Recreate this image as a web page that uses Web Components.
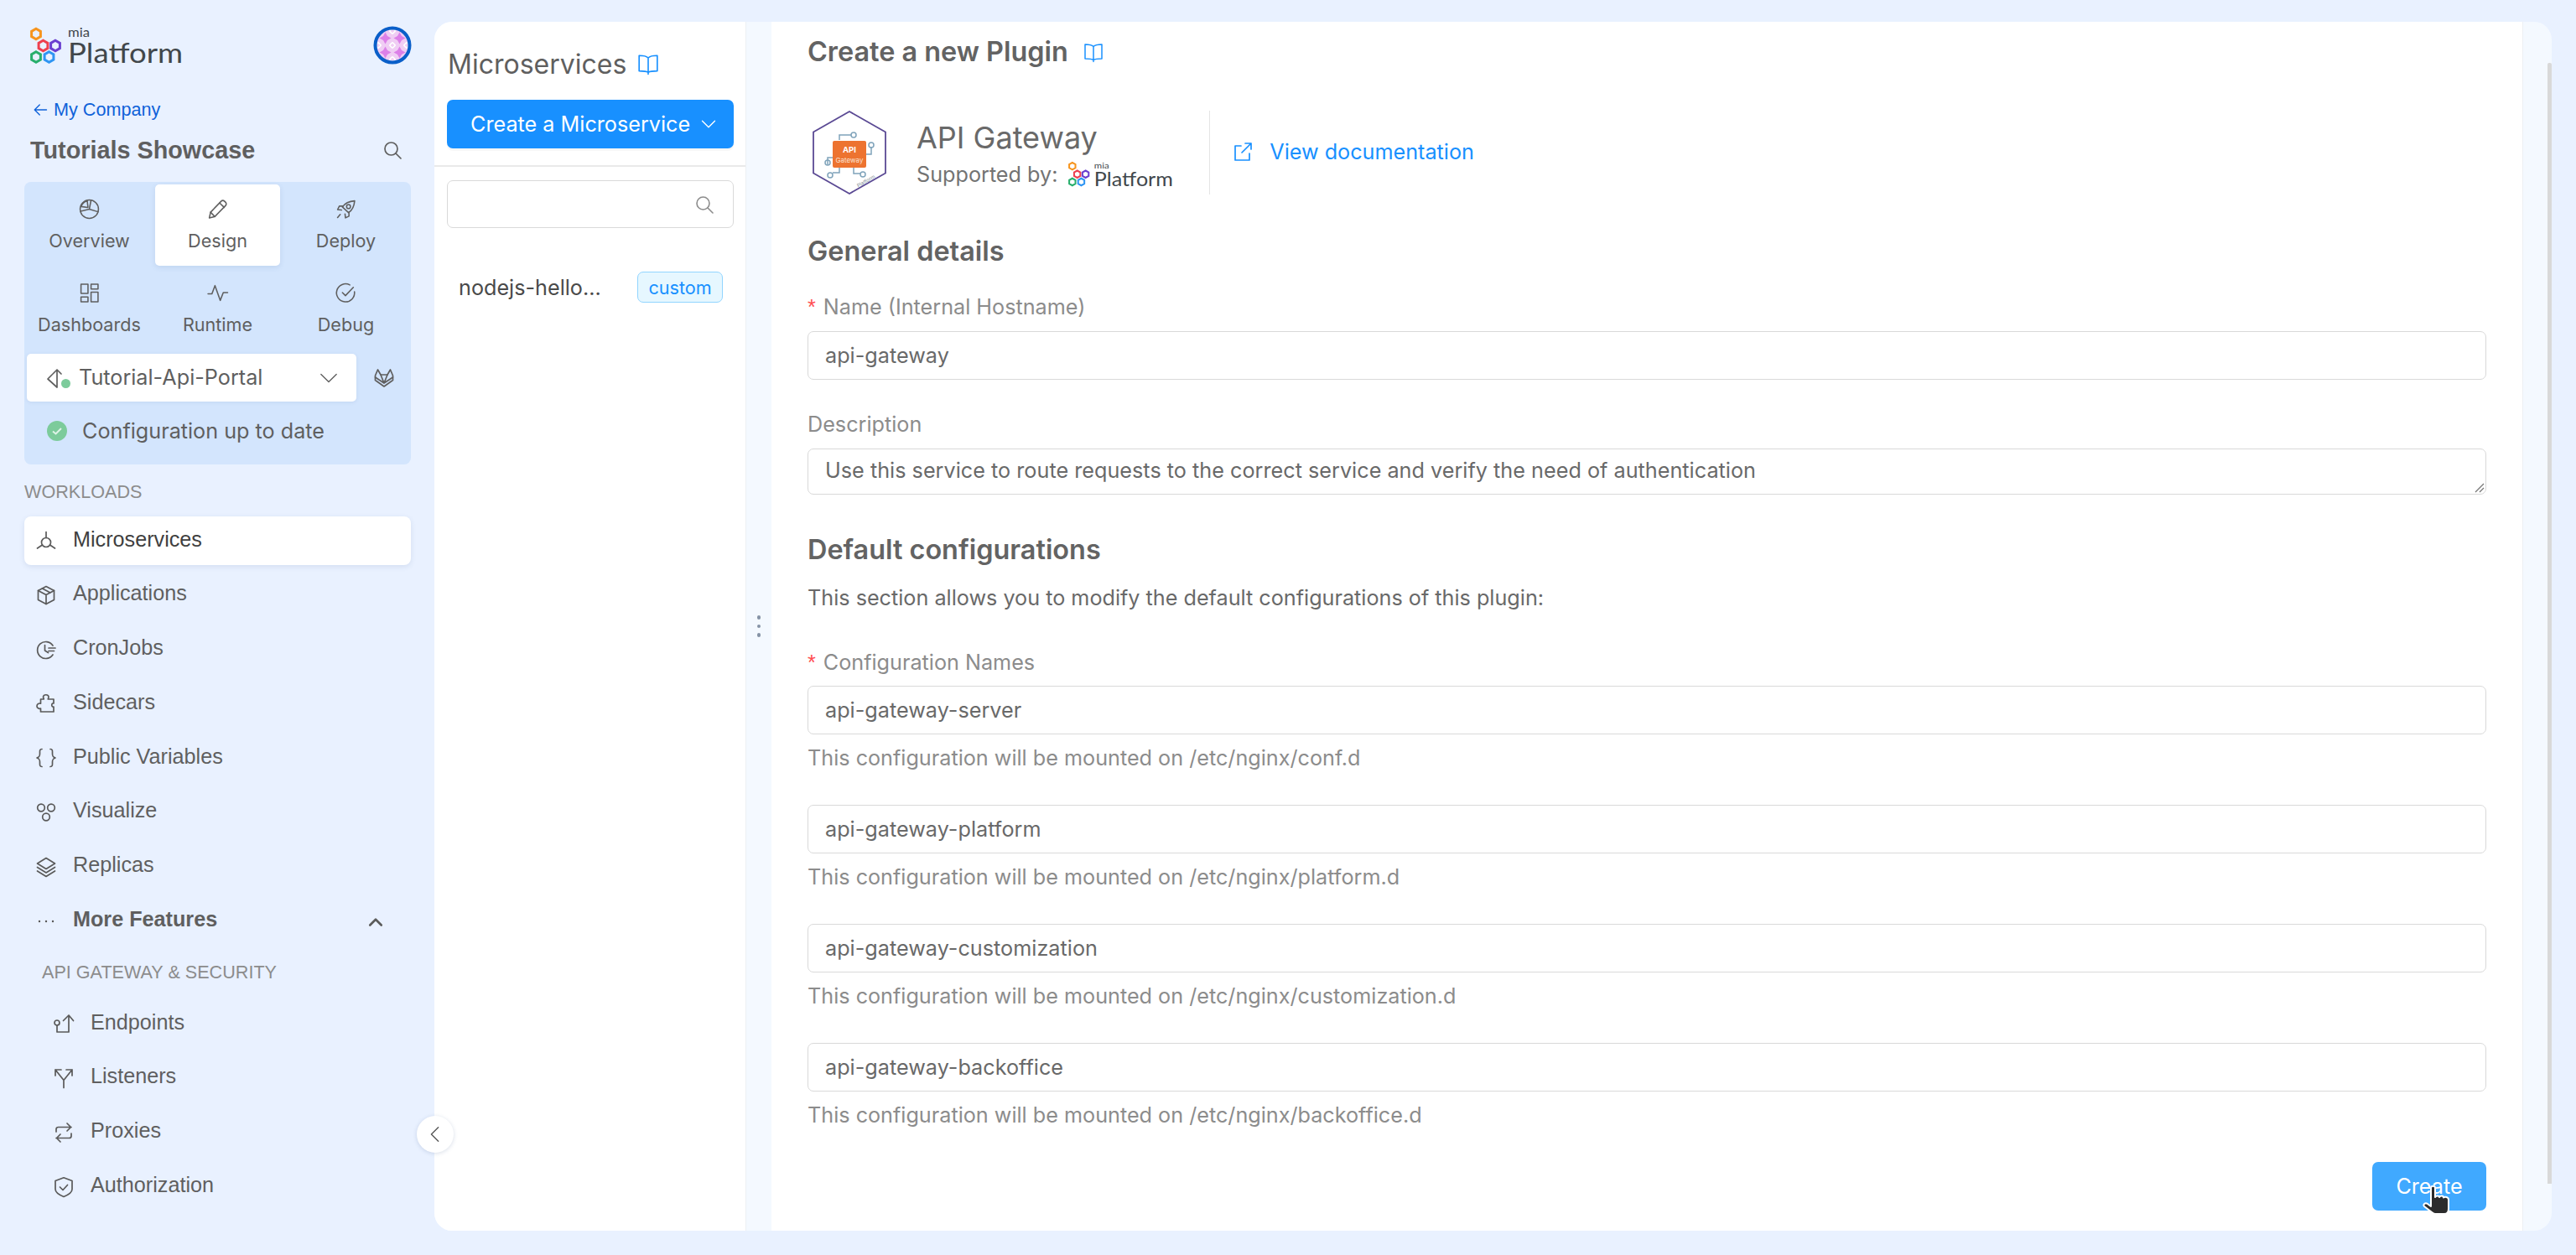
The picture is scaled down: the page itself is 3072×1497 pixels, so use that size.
<!DOCTYPE html>
<html>
<head>
<meta charset="utf-8">
<title>Create a new Plugin</title>
<style>
  html, body { margin: 0; height: 100%; overflow: hidden; background: #e9f1ff; }
  body { font-family: Inter, "Liberation Sans", sans-serif; color: #5f5f5f; }
</style>
</head>
<body>
<mia-app>
  <mia-sidebar slot="sidebar"></mia-sidebar>
  <mia-list slot="list"></mia-list>
  <mia-plugin-form slot="form"></mia-plugin-form>
</mia-app>

<script>
const ICONS = {
  search: '<circle cx="10.5" cy="10.5" r="7.5"/><path d="M16 16l6 6"/>',
  pie: '<circle cx="12" cy="12" r="10.500"/><path d="M12 12l-10 2.500M12 12l2-10.300M12 12l10 3" /><path d="M2.600 9c1-3 3.500-5.600 7-6.700L10.500 10z"/>',
  pencil: '<path d="M2.500 22l1.500-6.500L16 3c1.200-1.200 2.800-1.200 4 0l1 1c1.200 1.200 1.200 2.800 0 4L8.800 20.500z"/><path d="M4 15.500l4.800 5M14.500 5l5 5"/>',
  rocket: '<path d="M8 9.500c3-4.500 7.500-6.500 14-7-.5 6.500-2.500 10.500-7 13.500L8 9.500z"/><circle cx="15" cy="9" r="2.200"/><path d="M9 8.500L4.500 8.500 2.500 12.500l4.500.5M15.500 15.500v4.500l-4 2-.5-4.500M5.500 18L2.500 21.500"/>',
  dashboards: '<rect x="2.500" y="2" width="8" height="10.500"/><rect x="14" y="2" width="8" height="5.500"/><rect x="2.500" y="16.500" width="8" height="5.500"/><rect x="14" y="11" width="8" height="11"/>',
  pulse: '<path d="M1 13h4.500L9 3.500l6 17 3.500-9H23.500"/>',
  debug: '<path d="M21.800 10.500A10.300 10.300 0 1 1 16.500 2.800"/><path d="M8 11.500l3.500 3.500L20.500 5.500"/>',
  branch: '<path d="M14 23V2M9 7l5-5 5 5M14 23L3 13l5-5"/>',
  chevron: '<path d="M2 7l10 10L22 7"/>',
  gitlab: '<path d="M1.500 9L4.500 2 8 8h8l3.500-6 3 7v5.500L12 22 1.500 14.500z"/><path d="M1.500 11L12 18l10.500-7M8 8l4 10 4-10"/>',
  micro: '<circle cx="12" cy="14" r="5.500"/><path d="M12 8.500V1.500M7.500 17L1.500 21M16.500 17l6 4"/>',
  box: '<path d="M12 1.500l9.500 5v11L12 22.500l-9.500-5v-11z"/><path d="M2.500 6.500L12 11.500l9.500-5M12 11.500v11M7.500 4l9.500 5"/>',
  cron: '<path d="M20 7A10 10 0 1 0 20 18"/><path d="M10.500 6.500V13l4 2.500M15 10h8M15 13.500h6.500"/>',
  puzzle: '<path d="M8.500 4.500C8.500 .8 15 .8 15 4.500c0 1.200-.7 1.500-.7 2.500H21v5c-3-1-3 5 0 4v6H5.500v-4c-2 1-4.500-.5-4.500-2.800s2.500-3.700 4.500-3V7h3.700C9.500 6 8.500 5.500 8.500 4.500z"/>',
  braces: '<path d="M7 1.500C4 1.500 4.500 4 4.500 7S4 11 1 12c3 1 3.500 2 3.500 5S4 22.500 7 22.500M17 1.500c3 0 2.500 2.500 2.500 5.500s.5 4 3.500 5c-3 1-3.500 2-3.500 5s.5 5.500-2.500 5.500"/>',
  nodes: '<circle cx="6" cy="6.500" r="4.300"/><circle cx="18" cy="6.500" r="4.300"/><circle cx="12" cy="17.500" r="4.300"/>',
  layers: '<path d="M12 1.500l10.500 6.500L12 14.500 1.500 8z"/><path d="M1.500 12.500l10.500 6.500 10.500-6.500M1.500 17l10.500 6.500L22.500 17"/>',
  dots: '<path d="M4 12h.01M12 12h.01M20 12h.01" stroke-width="2.400" stroke-linecap="round"/>',
  up: '<path d="M3 18l9-9 9 9" stroke-width="3.500"/>',
  endpoints: '<circle cx="4" cy="11" r="3"/><path d="M4 14v8h14V2M11.500 8.500L18 2l5.500 6.500"/>',
  split: '<path d="M12 23.500v-9L2 2M12 14.500L22 2M2 9V2h7M15 2h7v7"/>',
  proxies: '<path d="M3 11V8c0-1.500 1-2.500 2.500-2.500H21M16 1l4.500 4.500L16 10M21 13v3c0 1.500-1 2.500-2.500 2.500H3M8 14l-4.500 4.500L8 23"/>',
  shield: '<path d="M12 .8L22 4.500v10c0 4-4 6.500-10 9-6-2.500-10-5-10-9v-10z"/><path d="M7.500 12l3.500 3.500 5.500-6"/>',
  book: '<path d="M12 5.500C10 3.500 7 3 2 3v17c5 0 8 .3 10 1.500 2-1.200 5-1.500 10-1.500V3c-5 0-8 .5-10 2.500zM12 5.500v18"/>',
  external: '<path d="M10 5H3v17h17v-8M11 13L22 2M15 2h7v7"/>',
  back: '<path d="M22 12H3M11 4l-8 8 8 8"/>',
  left: '<path d="M16 3l-9 9 9 9"/>',
  key: '<circle cx="12" cy="12" r="10"/>'
};

class MiaIcon extends HTMLElement {
  connectedCallback() {
    const size = this.getAttribute('size') || 24;
    const sw = this.getAttribute('sw') || 1.7;
    this.attachShadow({ mode: 'open' });
    this.shadowRoot.innerHTML = `<style>
      :host { display: inline-flex; flex: none; width: ${size}px; height: ${size}px; }
      svg { width: 100%; height: 100%; fill: none; stroke: currentColor; stroke-width: ${sw}; stroke-linejoin: round; stroke-linecap: round; overflow: visible; }
    </style><svg viewBox="0 0 24 24">${ICONS[this.getAttribute('name')] || ''}</svg>`;
  }
}

function hex(cx, cy, color) {
  const r = 6.2, w = 5.4;
  const d = `M${cx} ${cy - r}L${cx + w} ${cy - r / 2}V${cy + r / 2}L${cx} ${cy + r}L${cx - w} ${cy + r / 2}V${cy - r / 2}Z`;
  return `<path d="${d}" stroke="${color}"/>`;
}

const HEXES = `<g fill="none" stroke-width="3">
  ${hex(7, 7.5, '#f7941d')}${hex(15.5, 21.5, '#ee3f4e')}${hex(30, 21.5, '#6a3fd0')}${hex(7, 35, '#27ae6c')}${hex(22.5, 35, '#2f95f3')}
</g>`;

class MiaLogo extends HTMLElement {
  connectedCallback() {
    const h = this.getAttribute('height') || 43;
    this.attachShadow({ mode: 'open' });
    this.shadowRoot.innerHTML = `<style>
      :host { display: inline-flex; flex: none; }
      svg { display: block; height: ${h}px; width: auto; overflow: visible; }
      text { font-family: Lato, "Open Sans", sans-serif; fill: #41474b; }
    </style>
    <svg viewBox="0 0 182 43">
      ${HEXES}
      <text x="45" y="11" font-size="15" textLength="26" lengthAdjust="spacingAndGlyphs">mia</text>
      <text x="45" y="42" font-size="33" textLength="137" lengthAdjust="spacingAndGlyphs">Platform</text>
    </svg>`;
  }
}

class MiaTab extends HTMLElement {
  connectedCallback() {
    this.attachShadow({ mode: 'open' });
    this.shadowRoot.innerHTML = `<style>
      :host { display: flex; flex-direction: column; align-items: center; height: 97px; padding-top: 17px; box-sizing: border-box; border-radius: 5px; font-size: 21.600px; line-height: 36px; color: #5f5f5f; }
      :host([active]) { background: #fff; box-shadow: 0 2px 6px rgba(60,90,140,.12); }
      span { margin-top: 7px; }
    </style>
    <mia-icon name="${this.getAttribute('icon')}" size="25" sw="1.500"></mia-icon>
    <span><slot></slot></span>`;
  }
}

class MiaNavItem extends HTMLElement {
  connectedCallback() {
    const icon = this.getAttribute('icon');
    const trail = this.hasAttribute('trail') ? `<mia-icon class="trail" name="up" size="18"></mia-icon>` : '';
    this.attachShadow({ mode: 'open' });
    this.shadowRoot.innerHTML = `<style>
      :host { display: flex; align-items: center; height: 58px; margin-bottom: 6.800px; padding-left: 14px; padding-right: 33px; gap: 20px; box-sizing: border-box; border-radius: 8px; font-family: "Liberation Sans", Arial, sans-serif; font-size: 25.200px; color: #5f5f5f; }
      :host([sub]) { padding-left: 35px; }
      :host([active]) { background: #fff; color: #3f3f3f; box-shadow: 0 2px 6px rgba(60,90,140,.12); }
      :host([strong]) { font-weight: 700; }
      .label { flex: 1; margin-bottom: 4px; }
      mia-icon { color: #5a5a5a; }
    </style>
    <mia-icon name="${icon}" size="24"></mia-icon>
    <span class="label"><slot></slot></span>${trail}`;
  }
}

class MiaSidebar extends HTMLElement {
  connectedCallback() {
    this.attachShadow({ mode: 'open' });
    this.shadowRoot.innerHTML = `<style>
      :host { display: block; flex: none; height: 1467px; width: 518px; box-sizing: border-box; padding-top: 33px; overflow: hidden; }
      .top { display: flex; justify-content: space-between; align-items: flex-start; padding: 0 27px 0 36px; height: 43px; }
      .avatar { width: 46px; height: 46px; margin-top: -2px; }
      .back { display: flex; align-items: center; gap: 7px; margin: 37px 0 0 39px; height: 36px; color: #0f62d9; font-size: 21.600px; font-family: "Liberation Sans", Arial, sans-serif; }
      .title { display: flex; justify-content: space-between; align-items: center; margin: 12px 38px 0 36px; height: 36px; font: 700 28.800px/36px "Liberation Sans", Arial, sans-serif; color: #5f5f5f; }
      .panel { margin: 20px 28px 0 29px; height: 337px; box-sizing: border-box; padding: 3px; background: #d3e5fd; border-radius: 8px; }
      .tabs { display: grid; grid-template-columns: repeat(3, 1fr); column-gap: 4px; row-gap: 3px; }
      .branch { display: flex; align-items: center; gap: 21px; margin-top: 5px; }
      .select { flex: none; display: flex; align-items: center; width: 393px; height: 57px; box-sizing: border-box; padding: 0 22px 0 22px; background: #fff; border-radius: 5px; font-size: 25.200px; color: #5f5f5f; box-shadow: 0 1px 4px rgba(60,90,140,.1); }
      .select .name { flex: 1; margin-left: 10px; position: relative; top: -1px; }
      .dot { width: 11px; height: 11px; border-radius: 50%; background: #7ccb9b; margin: 14px 0 0 -5px; }
      .status { display: flex; align-items: center; gap: 18px; margin: 17px 0 0 24px; font-size: 25.200px; height: 36px; }
      .ok { width: 24px; height: 24px; }
      .heading { margin: 15px 0 0 29px; height: 36px; font: 400 21.600px/36px "Liberation Sans", Arial, sans-serif; color: #8c8c8c; }
      .sub { margin: 14.600px 0 14px 50px; height: 36px; font: 400 21.600px/36px "Liberation Sans", Arial, sans-serif; color: #8c8c8c; }
      .nav { margin: 11px 28px 0 29px; }
      .nav.second { margin-top: 0; }
    </style>
    <div class="top">
      <mia-logo height="43"></mia-logo>
      <svg class="avatar" viewBox="0 0 46 46">
        <defs><pattern id="p" width="17" height="17" patternUnits="userSpaceOnUse" x="6" y="6">
          <rect width="17" height="17" fill="#f0cdf4"/>
          <path d="M8.500 1.500l2.500 4.500 4.500 2.500-4.500 2.500-2.500 4.500-2.500-4.500-4.500-2.500 4.500-2.500z" fill="#dc80e8"/>
          <path d="M0 3.500L3.500 0M13.500 0L17 3.500M0 13.500L3.500 17M13.500 17L17 13.500" stroke="#fff" stroke-width="1.600"/>
        </pattern></defs>
        <circle cx="23" cy="23" r="20.500" fill="url(#p)" stroke="#0a5fc9" stroke-width="4"/>
      </svg>
    </div>
    <div class="back"><mia-icon name="back" size="18" sw="1.800"></mia-icon><span>My Company</span></div>
    <div class="title"><span>Tutorials Showcase</span><mia-icon name="search" size="24" sw="1.700"></mia-icon></div>
    <div class="panel">
      <div class="tabs">
        <mia-tab icon="pie">Overview</mia-tab>
        <mia-tab icon="pencil" active>Design</mia-tab>
        <mia-tab icon="rocket">Deploy</mia-tab>
        <mia-tab icon="dashboards">Dashboards</mia-tab>
        <mia-tab icon="pulse">Runtime</mia-tab>
        <mia-tab icon="debug">Debug</mia-tab>
      </div>
      <div class="branch">
        <div class="select">
          <mia-icon name="branch" size="24"></mia-icon><span class="dot"></span>
          <span class="name">Tutorial-Api-Portal</span>
          <mia-icon name="chevron" size="22" sw="1.500"></mia-icon>
        </div>
        <mia-icon name="gitlab" size="24"></mia-icon>
      </div>
      <div class="status">
        <svg class="ok" viewBox="0 0 24 24"><circle cx="12" cy="12" r="12" fill="#7ccb9b"/><path d="M7 12.500l3.500 3 6.500-6.500" fill="none" stroke="#dff3e7" stroke-width="2"/></svg>
        <span>Configuration up to date</span>
      </div>
    </div>
    <div class="heading">WORKLOADS</div>
    <div class="nav">
      <mia-nav-item icon="micro" active>Microservices</mia-nav-item>
      <mia-nav-item icon="box">Applications</mia-nav-item>
      <mia-nav-item icon="cron">CronJobs</mia-nav-item>
      <mia-nav-item icon="puzzle">Sidecars</mia-nav-item>
      <mia-nav-item icon="braces">Public Variables</mia-nav-item>
      <mia-nav-item icon="nodes">Visualize</mia-nav-item>
      <mia-nav-item icon="layers">Replicas</mia-nav-item>
      <mia-nav-item icon="dots" strong trail>More Features</mia-nav-item>
    </div>
    <div class="sub">API GATEWAY &amp; SECURITY</div>
    <div class="nav second">
      <mia-nav-item icon="endpoints" sub>Endpoints</mia-nav-item>
      <mia-nav-item icon="split" sub>Listeners</mia-nav-item>
      <mia-nav-item icon="proxies" sub>Proxies</mia-nav-item>
      <mia-nav-item icon="shield" sub>Authorization</mia-nav-item>
      <mia-nav-item icon="key" sub></mia-nav-item>
    </div>`;
  }
}

class MiaList extends HTMLElement {
  connectedCallback() {
    this.attachShadow({ mode: 'open' });
    this.shadowRoot.innerHTML = `<style>
      :host { display: block; flex: none; width: 371px; height: 100%; background: #fff; }
      .head { display: flex; align-items: center; gap: 13px; margin: 30px 0 0 16px; height: 40px; font-size: 32px; color: #5f5f5f; }
      .head mia-icon { color: #1890ff; }
      .create { display: flex; align-items: center; gap: 13px; margin: 23px 14px 0 15px; padding-left: 28px; height: 58px; background: #1890ff; color: #fff; border-radius: 7px; font-size: 25.200px; box-shadow: 0 3px 0 rgba(0,0,0,.03); }
      hr { margin: 20px 0 0; border: 0; border-top: 2px solid #e9e9e9; }
      .search { display: flex; align-items: center; justify-content: flex-end; margin: 16px 14px 0 15px; height: 57px; box-sizing: border-box; padding-right: 22px; border: 1.500px solid #d9d9d9; border-radius: 7px; color: #8c8c8c; }
      .row { display: flex; align-items: center; justify-content: space-between; margin: 52px 27px 0 29px; height: 37px; font-size: 25.200px; color: #4a4a4a; }
      .tag { height: 37px; width: 102px; box-sizing: border-box; display: flex; align-items: center; justify-content: center; background: #e6f7ff; border: 1.500px solid #91d5ff; border-radius: 7px; color: #1890ff; font-size: 21.600px; }
    </style>
    <div class="head"><span>Microservices</span><mia-icon name="book" size="26" sw="1.500"></mia-icon></div>
    <div class="create"><span>Create a Microservice</span><mia-icon name="chevron" size="18" sw="1.800"></mia-icon></div>
    <hr>
    <div class="search"><mia-icon name="search" size="24" sw="1.600"></mia-icon></div>
    <div class="row"><span>nodejs-hello...</span><span class="tag">custom</span></div>`;
  }
}

class MiaField extends HTMLElement {
  connectedCallback() {
    const req = this.hasAttribute('required') ? '<i>*</i>' : '';
    const label = this.getAttribute('label');
    const help = this.getAttribute('help');
    const area = this.hasAttribute('area');
    this.attachShadow({ mode: 'open' });
    this.shadowRoot.innerHTML = `<style>
      :host { display: block; font-size: 25.200px; }
      .label { height: 36px; line-height: 36px; color: #8c8c8c; margin-bottom: 11px; }
      :host([tight]) .label { margin-bottom: 10px; }
      i { font-style: normal; color: #ff4d4f; margin-right: 9px; font-family: "Liberation Sans", sans-serif; }
      .input { position: relative; display: flex; align-items: center; box-sizing: border-box; height: 58px; padding: 0 20px; border: 1.500px solid #d9d9d9; border-radius: 7px; color: #696969; background: #fff; letter-spacing: .02px; }
      :host([area]) .input { height: 55px; padding-bottom: 4px; }
      .grip { position: absolute; right: 1px; bottom: 1px; width: 14px; height: 14px; }
      .help { height: 36px; line-height: 36px; margin-top: 10px; color: #8c8c8c; }
    </style>
    ${label ? `<div class="label">${req}${label}</div>` : ''}
    <div class="input"><span><slot></slot></span>${area ? '<svg class="grip" viewBox="0 0 14 14"><path d="M13 3L3 13M13 8l-5 5" stroke="#777" stroke-width="1.300"/></svg>' : ''}</div>
    ${help ? `<div class="help">${help}</div>` : ''}`;
  }
}

class MiaPluginLogo extends HTMLElement {
  connectedCallback() {
    this.attachShadow({ mode: 'open' });
    this.shadowRoot.innerHTML = `<style>
      :host { display: block; flex: none; width: 100px; height: 100px; }
      svg { display: block; width: 100px; height: 100px; }
      text { font-family: Inter, sans-serif; text-anchor: middle; }
    </style>
    <svg viewBox="0 0 100 100">
      <path d="M50 1L93 25.500v49L50 99 7 74.500v-49z" fill="#fff" stroke="#5b4a94" stroke-width="1.800"/>
      <g fill="none" stroke="#7fa3ba" stroke-width="1.500">
        <path d="M38 35v-6h14"/><circle cx="55" cy="29" r="3"/>
        <path d="M70 52h6v-8h-1"/><circle cx="76" cy="41" r="3"/>
        <path d="M30 56h-6v8"/><circle cx="24" cy="62" r="3"/>
        <path d="M38 66v8H30"/><circle cx="27" cy="77" r="3"/>
        <path d="M55 68v7h8"/><circle cx="66" cy="76" r="3"/>
      </g>
      <rect x="30" y="36" width="40" height="32" rx="2" fill="#ed7330"/>
      <text x="50" y="50" font-size="9.500" font-weight="700" fill="#fff">API</text>
      <text x="50" y="62" font-size="8" fill="#fbe3d3">Gateway</text>
      <g transform="rotate(-30 68 85)"><text x="70" y="87" font-size="6" fill="#7c8a94">Platform</text></g>
    </svg>`;
  }
}

class MiaPluginForm extends HTMLElement {
  connectedCallback() {
    this.attachShadow({ mode: 'open' });
    this.shadowRoot.innerHTML = `<style>
      :host { display: flex; flex-direction: column; box-sizing: border-box; flex: 1; min-width: 0; height: 100%; padding: 15px 43px 0; background: #fff; border-right: 1.500px solid #ecf0f4; font-size: 25.200px; color: #696969; position: relative; }
      .h { flex: none; height: 40px; line-height: 40px; font-size: 32.400px; font-weight: 600; color: #636363; }
      .title { display: flex; align-items: center; gap: 18px; margin-top: 1px; margin-bottom: -1px; }
      .title mia-icon { color: #1890ff; }
      .plugin { display: flex; align-items: center; flex: none; height: 100px; margin-top: 51px; }
      .who { margin: 4px 0 0 30px; }
      .name { font-size: 36px; line-height: 44px; color: #696969; }
      .by { display: flex; align-items: center; gap: 13px; line-height: 36px; margin-top: 4px; color: #737373; }
      .sep { width: 1.500px; height: 100px; background: #e4e4e4; margin: 0 27px 0 42.500px; }
      .doc { display: flex; align-items: center; gap: 20px; color: #1890ff; margin-top: -3px; }
      .actions { display: flex; justify-content: flex-end; margin-top: 38px; }
      .create { position: relative; display: flex; align-items: center; justify-content: center; width: 136px; height: 58px; background: #40a9ff; color: #fff; border-radius: 7px; }
      .hand { position: absolute; left: 59px; top: 28px; width: 36px; height: 37px; }
      mia-field { flex: none; }
      mia-field.gap { margin-top: 38px; }
    </style>
    <div class="h title"><span>Create a new Plugin</span><mia-icon name="book" size="24" sw="1.500"></mia-icon></div>
    <div class="plugin">
      <mia-plugin-logo></mia-plugin-logo>
      <div class="who">
        <div class="name">API Gateway</div>
        <div class="by"><span>Supported by:</span><mia-logo height="29.500"></mia-logo></div>
      </div>
      <div class="sep"></div>
      <div class="doc"><mia-icon name="external" size="24" sw="1.700"></mia-icon><span>View documentation</span></div>
    </div>
    <div class="h" style="margin-top:48px;">General details</div>
    <mia-field style="margin-top:28px" label="Name (Internal Hostname)" required>api-gateway</mia-field>
    <mia-field style="margin-top:35px" label="Description" area>Use this service to route requests to the correct service and verify the need of authentication</mia-field>
    <div class="h" style="margin-top:46px;">Default configurations</div>
    <div style="margin-top:19px;height:36px;line-height:36px;flex:none;">This section allows you to modify the default configurations of this plugin:</div>
    <mia-field style="margin-top:41px" tight label="Configuration Names" required help="This configuration will be mounted on /etc/nginx/conf.d">api-gateway-server</mia-field>
    <mia-field class="gap" help="This configuration will be mounted on /etc/nginx/platform.d">api-gateway-platform</mia-field>
    <mia-field class="gap" help="This configuration will be mounted on /etc/nginx/customization.d">api-gateway-customization</mia-field>
    <mia-field class="gap" help="This configuration will be mounted on /etc/nginx/backoffice.d">api-gateway-backoffice</mia-field>
    <div class="actions">
      <div class="create"><span>Create</span>
        <svg class="hand" viewBox="0 0 36 37">
          <path d="M11 3c0-3 5-3 5 0v11c1-2 5-2 5 0 1-2 5-2 5 .5 2-1.500 6-.5 6 2.500v11c0 4-2 6-5 6H16c-2 0-3-1-4-2L3 25c-2-2 1-5 4-3l4 3z" fill="#2c2c2c" stroke="#fff" stroke-width="2" stroke-linejoin="round"/>
        </svg>
      </div>
    </div>`;
  }
}

class MiaApp extends HTMLElement {
  constructor() {
    super();
    this.attachShadow({ mode: 'open' });
    this.shadowRoot.innerHTML = `<style>
      :host { display: flex; height: 100vh; }
      .card { position: relative; flex: 1; min-width: 0; display: flex; height: 1442px; margin: 26px 29px 0 0; background: #f4f9ff; border-radius: 21px; overflow: hidden; }
      .resize { flex: none; width: 31px; display: flex; flex-direction: column; align-items: center; justify-content: center; gap: 6px; border-left: 1.500px solid #ecf0f4; box-sizing: border-box; }
      .resize b { width: 4.500px; height: 4.500px; border-radius: 50%; background: #8593a6; }
      .bar { flex: none; width: 34px; display: flex; justify-content: flex-end; padding: 49px 0 56px; box-sizing: border-box; }
      .bar b { width: 5px; height: 100%; background: #d9d9d9; border-radius: 2px 2px 0 0; }
      .collapse { position: absolute; left: 497px; top: 1331px; width: 44px; height: 44px; border-radius: 50%; background: #fff; display: flex; align-items: center; justify-content: center; color: #595959; box-shadow: 0 1px 5px rgba(60,90,140,.2); z-index: 2; }
    </style>
    <slot name="sidebar"></slot>
    <div class="card">
      <slot name="list"></slot>
      <div class="resize"><b></b><b></b><b></b></div>
      <slot name="form"></slot>
      <div class="bar"><b></b></div>
    </div>
    <div class="collapse"><mia-icon name="left" size="22" sw="1.600"></mia-icon></div>`;
  }
}

customElements.define('mia-icon', MiaIcon);
customElements.define('mia-logo', MiaLogo);
customElements.define('mia-tab', MiaTab);
customElements.define('mia-nav-item', MiaNavItem);
customElements.define('mia-sidebar', MiaSidebar);
customElements.define('mia-list', MiaList);
customElements.define('mia-field', MiaField);
customElements.define('mia-plugin-logo', MiaPluginLogo);
customElements.define('mia-plugin-form', MiaPluginForm);
customElements.define('mia-app', MiaApp);
</script>
</body>
</html>
